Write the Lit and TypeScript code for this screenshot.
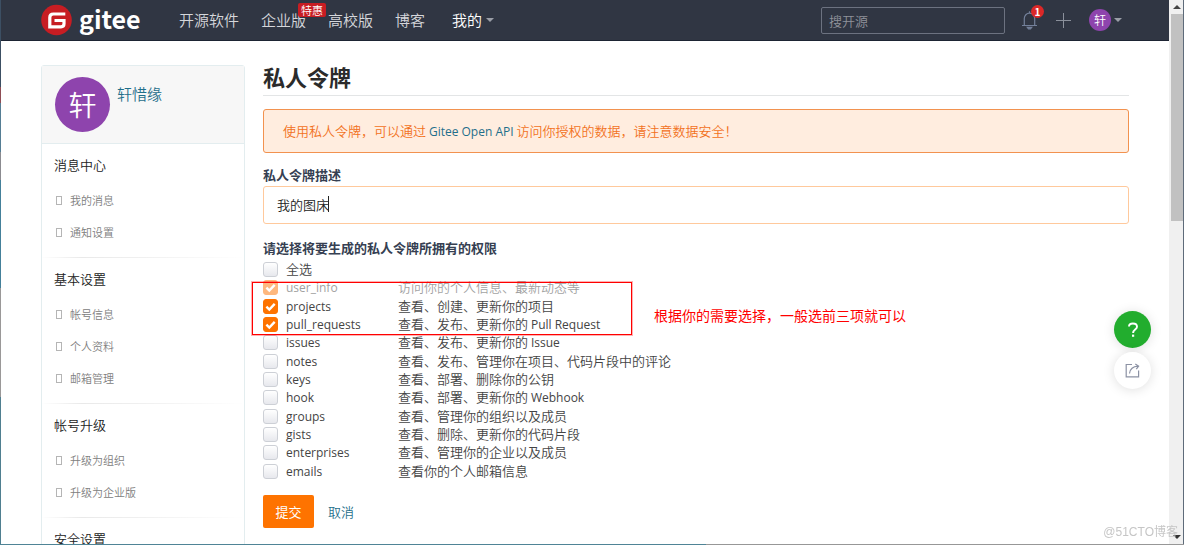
import { LitElement, html, css } from "lit";
import { customElement } from "lit/decorators.js";

const tick = css`url("data:image/svg+xml,%3Csvg xmlns='http://www.w3.org/2000/svg' viewBox='0 0 15 15'%3E%3Cpath d='M3.4 7.6l2.9 2.9 5.4-5.6' fill='none' stroke='white' stroke-width='2.4'/%3E%3C/svg%3E")`;

@customElement("site-header")
class SiteHeader extends LitElement {
  static styles = css`
    :host { display: block; background: #303643; border-bottom: 1px solid #1d2433; }
    .bar { height: 40px; padding: 0 40px; display: flex; align-items: center; }
    a { color: #d5d7db; text-decoration: none; }
    .brand { display: flex; align-items: center; gap: 7px; width: 138px; color: #fff; }
    .brand svg { flex: none; }
    .word { font-size: 25px; font-weight: 700; line-height: 36px; padding-bottom: 4px; }
    nav { display: flex; gap: 22px; font-size: 15px; line-height: 24px; flex: 1; }
    nav a { position: relative; white-space: nowrap; }
    nav .on { color: #fff; display: flex; align-items: center; gap: 4px; margin-left: 5px; }
    .tag { position: absolute; right: -20px; top: -5px; background: #c71d23; color: #fff; font-size: 11px; line-height: 14px; padding: 0 3px; border-radius: 2px; z-index: 1; }
    .search { box-sizing: border-box; width: 184px; height: 27px; border: 1px solid #6c7280; border-radius: 2px; background: transparent; font: inherit; font-size: 13px; padding: 0 7px; color: #ddd; }
    .search::placeholder { color: #8f929a; }
    .tools { display: flex; align-items: center; gap: 17px; margin-left: 16px; padding-right: 7px; }
    .tools button { background: none; border: 0; padding: 0; position: relative; display: flex; align-items: center; gap: 3px; font: inherit; color: #fff; }
    .badge { position: absolute; left: 10px; top: -5px; width: 13px; height: 13px; border-radius: 50%; background: #db2828; font-size: 10px; line-height: 13px; font-weight: 700; text-align: center; }
    .face { width: 22px; height: 22px; border-radius: 50%; background: #8e44ad; font-size: 12px; line-height: 22px; text-align: center; }
    .caret { border: 4px solid transparent; border-top-color: #9a9ea7; border-bottom: 0; }
  `;
  render() {
    return html`<header class="bar">
      <a class="brand" href="#">
        <svg width="31" height="32" viewBox="0 0 31 32"><circle cx="15.5" cy="16" r="15.3" fill="#c71d23"/><path d="M24.3 10H12.400Q8.800 10 8.800 13.500V22.800H20q3 0 3-3V16.500H13.500" fill="none" stroke="#fff" stroke-width="3.2"/></svg>
        <span class="word">gitee</span>
      </a>
      <nav>
        <a href="#">开源软件</a>
        <a href="#">企业版<span class="tag">特惠</span></a>
        <a href="#">高校版</a>
        <a href="#">博客</a>
        <a href="#" class="on">我的<i class="caret"></i></a>
      </nav>
      <input class="search" type="search" placeholder="搜开源" aria-label="搜开源" />
      <div class="tools">
        <button aria-label="通知">
          <svg width="17" height="20" viewBox="0 0 17 20" fill="none" stroke="#73809a" stroke-width="1.2"><path d="M1 15.5h15M3.3 15.3V8.4a5.2 5.2 0 0 1 10.4 0v6.9M8.5 1.2v2"/><path d="M6.3 17.3h4.4l-1.2 1.5h-2z" fill="#73809a"/></svg>
          <span class="badge">1</span>
        </button>
        <button aria-label="新建">
          <svg width="17" height="17" viewBox="0 0 17 17" stroke="#8a909b" stroke-width="1"><path d="M8.5 1v15M1 8.5h15"/></svg>
        </button>
        <button><span class="face">轩</span><i class="caret"></i></button>
      </div>
    </header>`;
  }
}

@customElement("side-menu")
class SideMenu extends LitElement {
  static styles = css`
    :host { display: block; border: 1px solid #e3edef; border-radius: 3px 3px 0 0; }
    .user { display: flex; gap: 7px; background: #f7f7f7; padding: 11px 13px; border-bottom: 1px solid #e3edef; }
    .face { width: 55px; height: 55px; border-radius: 50%; background: #8e44ad; color: #fff; font-size: 28px; line-height: 54px; text-align: center; }
    .user a { color: #1f6f8b; font-size: 15px; line-height: 24px; margin-top: 5px; text-decoration: none; }
    section { padding: 2px 12px 9px; border-bottom: 1px solid; border-image: linear-gradient(90deg, #fff, #e9e9e9 20%, #f0f0f0 50%, #fff) 1; }
    h2 { margin: 0; font-size: 13px; line-height: 38px; font-weight: 350; color: #222; }
    section a { display: flex; align-items: center; gap: 8px; height: 32px; font-size: 11px; color: #808080; text-decoration: none; }
    .mark { width: 4px; height: 7px; margin-left: 2px; border: 1px solid #b5b5b5; }
  `;
  groups: [string, string[]][] = [
    ["消息中心", ["我的消息", "通知设置"]],
    ["基本设置", ["帐号信息", "个人资料", "邮箱管理"]],
    ["帐号升级", ["升级为组织", "升级为企业版"]],
    ["安全设置", []],
  ];
  render() {
    return html`
      <div class="user"><span class="face">轩</span><a href="#">轩惜缘</a></div>
      ${this.groups.map(([title, items]) => html`<section>
        <h2>${title}</h2>
        ${items.map((t) => html`<a href="#"><i class="mark"></i>${t}</a>`)}
      </section>`)}`;
  }
}

@customElement("token-form")
class TokenForm extends LitElement {
  static styles = css`
    :host { display: block; }
    h1 { margin: 0; font-size: 22px; line-height: 22px; padding-bottom: 8px; border-bottom: 1px solid #e3e5e6; color: #2b2b2b; font-weight: 700; }
    a { color: #1f6f8b; text-decoration: none; }
    .alert { margin-top: 13px; padding: 12px 19px 11px; border: 1px solid #f2924f; border-radius: 3px; background: #ffeddf; color: #f2711c; line-height: 18px; }
    .title { display: block; margin-top: 12px; line-height: 20px; font-weight: 700; color: #363f52; }
    .field { position: relative; margin: 1px 0 14px; }
    .text { box-sizing: border-box; display: block; width: 100%; height: 38px; padding: 0 13px 2px; border: 1px solid #ffc99c; border-radius: 3px; font: inherit; color: #222; background: #fff; outline: none; }
    .cursor { position: absolute; left: 65px; top: 10px; width: 1px; height: 16px; background: #222; }
    fieldset { border: 0; margin: 0; padding: 0; min-width: 0; }
    legend { padding: 0; line-height: 20px; font-weight: 700; color: #363f52; }
    .list { position: relative; display: grid; grid-auto-rows: 1fr; height: 220px; margin-top: 2px; color: #444; }
    .list label { display: grid; grid-template-columns: 15px 104px 1fr; gap: 8px; align-items: baseline; line-height: 18px; min-height: 0; }
    .list .off { opacity: 0.5; }
    .en { font-family: "Open Sans", "Noto Sans CJK SC", sans-serif; font-size: 12px; font-weight: 400; }
    .box { appearance: none; align-self: center; margin: 0; width: 15px; height: 15px; box-sizing: border-box; border: 1px solid #cdd0d6; border-radius: 3px; background: linear-gradient(#fff, #e7e8ed); }
    .box:checked { border-color: #fe7300; background: #fe7300 ${tick} center / 15px 15px no-repeat; }
    .frame { position: absolute; left: -11px; top: 22px; width: 378px; height: 51px; border: 1px solid #f00; outline: 1px solid rgba(255, 0, 0, 0.3); outline-offset: 0; pointer-events: none; }
    .hint { position: absolute; left: 391px; top: 45px; line-height: 20px; font-size: 14px; font-weight: 400; color: #f00; white-space: nowrap; }
    .actions { display: flex; align-items: center; gap: 14px; margin-top: 15px; }
    button { width: 51px; height: 33px; border: 0; border-radius: 2px; background: #fe7300; color: #fff; font: inherit; font-weight: 400; padding: 0; }
  `;
  scopes: [string, string, boolean][] = [
    ["user_info", "访问你的个人信息、最新动态等", true],
    ["projects", "查看、创建、更新你的项目", true],
    ["pull_requests", "查看、发布、更新你的 Pull Request", true],
    ["issues", "查看、发布、更新你的 Issue", false],
    ["notes", "查看、发布、管理你在项目、代码片段中的评论", false],
    ["keys", "查看、部署、删除你的公钥", false],
    ["hook", "查看、部署、更新你的 Webhook", false],
    ["groups", "查看、管理你的组织以及成员", false],
    ["gists", "查看、删除、更新你的代码片段", false],
    ["enterprises", "查看、管理你的企业以及成员", false],
    ["emails", "查看你的个人邮箱信息", false],
  ];
  // Latin runs use their own face so they sit evenly beside the Chinese text.
  mixed(text: string) {
    return text.split(/([A-Za-z]+(?: [A-Za-z]+)*)/).map((part, i) => (i % 2 ? html`<span class="en">${part}</span>` : part));
  }
  render() {
    return html`
      <h1>私人令牌</h1>
      <div class="alert">使用私人令牌，可以通过 <a href="#" class="en">Gitee Open API</a> 访问你授权的数据，请注意数据安全！</div>
      <label class="title" for="desc">私人令牌描述</label>
      <div class="field"><input id="desc" class="text" type="text" .value=${"我的图床"} /><i class="cursor"></i></div>
      <fieldset>
        <legend>请选择将要生成的私人令牌所拥有的权限</legend>
        <div class="list">
          <label><input class="box" type="checkbox" /><span>全选</span></label>
          ${this.scopes.map(([name, text, on]) => html`<label class=${name === "user_info" ? "off" : ""}>
            <input class="box" type="checkbox" .checked=${on} ?disabled=${name === "user_info"} />
            <span class="en">${name}</span><span>${this.mixed(text)}</span>
          </label>`)}
          <div class="frame"></div>
          <div class="hint">根据你的需要选择，一般选前三项就可以</div>
        </div>
      </fieldset>
      <div class="actions"><button type="submit">提交</button><a href="#">取消</a></div>`;
  }
}

@customElement("app-root")
class AppRoot extends LitElement {
  static styles = css`
    :host { display: grid; grid-template-columns: 1px 1fr 15px; grid-template-rows: 1fr 1px; height: 100vh; overflow: hidden; background: #fff; font: 350 13px/20px "Noto Sans CJK SC", sans-serif; }
    .edge { background: linear-gradient(#3c4f63 0 16%, #8f4d55 16% 19%, #557d94 19% 28%, #8b8b90 28% 33%, #44809a 33% 53%, #9a9898 53% 73%, #4f7f90 73%); }
    .view { overflow: hidden; }
    .cols { display: grid; grid-template-columns: 204px 1fr; gap: 18px; padding: 24px 40px 0; }
    .scroll { display: flex; flex-direction: column; background: #f0f0f0; border-right: 1px solid #5e6b7a; padding: 0 0 0 1px; align-items: center; }
    .up, .down { border: 4px solid transparent; }
    .up { border-bottom-color: #444; border-top: 0; margin: 5px 0; }
    .down { border-top-color: #333; border-bottom: 0; margin: auto 0 5px; }
    .thumb { width: 12px; height: 38%; background: #c1c1c1; }
    .base { grid-column: 1 / -1; background: linear-gradient(90deg, #4f8496 0 706px, #979797 706px); }
    .help { position: fixed; right: 33px; bottom: 156px; display: flex; flex-direction: column; gap: 4px; }
    .help button { width: 37px; height: 37px; border: 0; border-radius: 50%; padding: 0; background: #fff; box-shadow: 0 1px 12px rgba(0, 0, 0, 0.13); display: grid; place-items: center; }
    .help .ask { background: #22ad2e; }
    .mark { position: fixed; right: 6px; bottom: 4px; font: 400 12px/18px "Liberation Sans", "Noto Sans CJK SC", sans-serif; color: #c6c6c6; }
  `;
  render() {
    return html`
      <div class="edge"></div>
      <div class="view">
        <site-header></site-header>
        <main class="cols"><side-menu></side-menu><token-form></token-form></main>
      </div>
      <div class="scroll"><i class="up"></i><i class="thumb"></i><i class="down"></i></div>
      <div class="base"></div>
      <div class="help">
        <button class="ask" aria-label="帮助"><svg width="12" height="16" viewBox="0 0 12 16" fill="none" stroke="#fff" stroke-width="1.9"><path d="M2 4.6C2 2.6 3.6 1.5 5.9 1.5S10 2.7 10 4.8c0 2.6-3.9 3-3.9 6.1"/><path d="M5 13.7h2.2" stroke-width="2.2"/></svg></button>
        <button aria-label="反馈"><svg width="15" height="15" viewBox="0 0 15 15" fill="none" stroke="#8c92a4" stroke-width="1.2"><path d="M7 1.5H1.2v12.3h12.4V7.5"/><path d="M4.5 10.5C5 6.500 8 3.500 13 3.200M10.300 1l3.300 2.100-2.300 3.100"/></svg></button>
      </div>
      <div class="mark">@51CTO博客</div>`;
  }
}
